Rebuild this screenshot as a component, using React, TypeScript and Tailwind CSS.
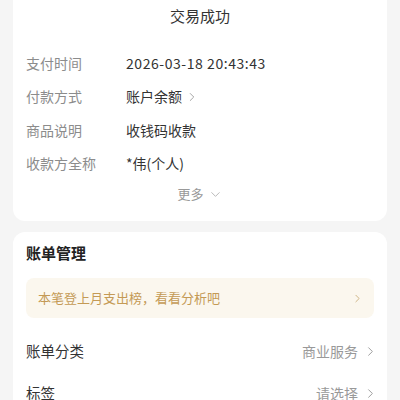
import React from "react";
import { ChevronRight, ChevronDown } from "lucide-react";

const font = {
  fontFamily: '"Noto Sans CJK SC", "Liberation Sans", sans-serif',
};

interface InfoRowProps {
  label: string;
  value: string;
  arrow?: boolean;
  wide?: boolean;
}

const InfoRow = ({ label, value, arrow, wide }: InfoRowProps) => (
  <div className="flex items-center h-[33.3px] text-[14px]">
    <span className="w-[100px] text-[#8c8c8c]">{label}</span>
    <span className={wide ? "text-[#333333] tracking-[0.55px]" : "flex items-center text-[#333333]"}>
      {value}
      {arrow && (
        <ChevronRight size={14} strokeWidth={1.5} className="ml-[3px] text-[#999999]" />
      )}
    </span>
  </div>
);

interface ManageRowProps {
  label: string;
  value: string;
}

const ManageRow = ({ label, value }: ManageRowProps) => (
  <div className="flex items-center justify-between h-[42px]">
    <span className="text-[14.5px] text-[#333333]">{label}</span>
    <span className="flex items-center text-[14px] text-[#999999]">
      {value}
      <ChevronRight size={15} strokeWidth={1.5} className="ml-[5px] -mr-[4px] text-[#999999]" />
    </span>
  </div>
);

export default function App() {
  return (
    <div className="min-h-[400px] bg-[#f5f5f5] pb-4" style={font}>
      <div className="mx-[13px] bg-white rounded-b-[12px] px-[13px] pt-[5px] pb-[17px]">
        <div className="text-center text-[15px] leading-[22px] text-[#333333]">交易成功</div>
        <div className="mt-[20px]">
          <InfoRow label="支付时间" value="2026-03-18 20:43:43" wide />
          <InfoRow label="付款方式" value="账户余额" arrow />
          <InfoRow label="商品说明" value="收钱码收款" />
          <InfoRow label="收款方全称" value="*伟(个人)" />
        </div>
        <div className="mt-[4px] flex items-center justify-center h-[20px] text-[13px] text-[#999999]">
          <span>更多</span>
          <ChevronDown size={15} strokeWidth={1.3} className="ml-[4px] text-[#aaaaaa]" />
        </div>
      </div>

      <div className="mx-[13px] mt-[11px] bg-white rounded-[12px] px-[13px] pt-[10px]">
        <div className="text-[15px] leading-[22px] font-bold text-[#222222]">账单管理</div>
        <div className="mt-[14px] h-[40px] rounded-[8px] bg-[#fbf7ee] flex items-center justify-between pl-[12px] pr-[10px]">
          <span className="text-[13px] text-[#c49a55]">本笔登上月支出榜，看看分析吧</span>
          <ChevronRight size={13} strokeWidth={1.5} className="text-[#c4a670]" />
        </div>
        <div className="mt-[12px]">
          <ManageRow label="账单分类" value="商业服务" />
          <ManageRow label="标签" value="请选择" />
        </div>
      </div>
    </div>
  );
}
